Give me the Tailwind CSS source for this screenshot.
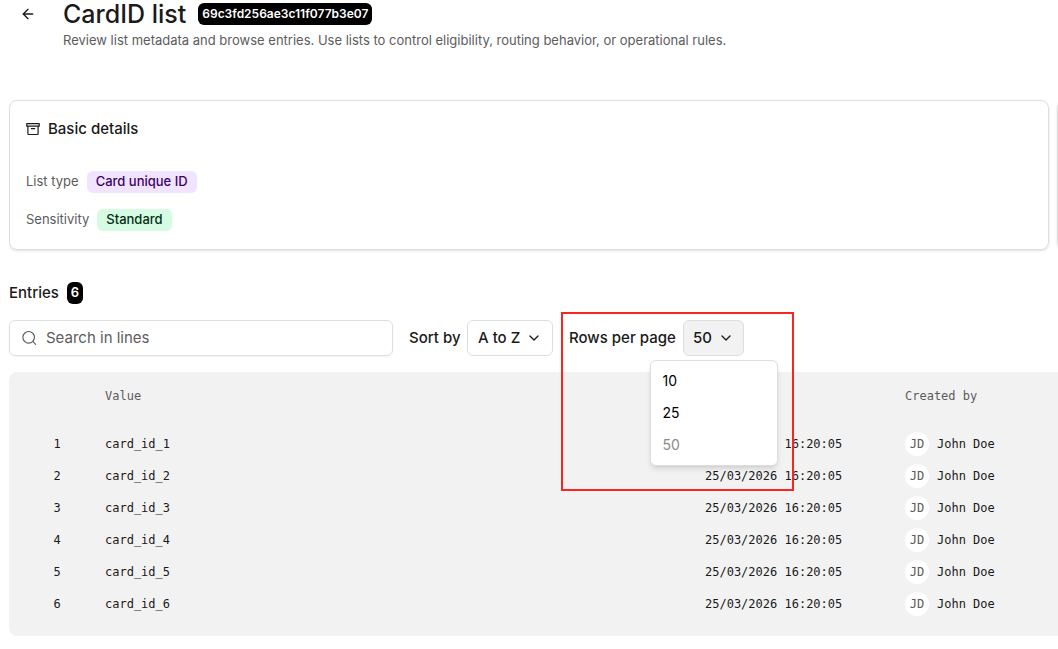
<!DOCTYPE html>
<html lang="en">
<head>
    <meta charset="UTF-8">
    <meta name="viewport" content="width=device-width, initial-scale=1.0">
    <title>CardID list</title>
    <script src="https://cdn.jsdelivr.net/npm/@tailwindcss/browser@4"></script>
</head>
<body class="bg-white font-[Inter,sans-serif] font-medium text-[#1a1a1a] overflow-x-hidden">
    <main class="pl-[9px]">
        <!-- Page header -->
        <header class="flex gap-[17px] pl-px">
            <a href="#" aria-label="Back" class="flex h-7 w-9 shrink-0 items-center justify-center">
                <svg class="size-4" viewBox="0 0 24 24" fill="none" stroke="currentColor" stroke-width="2" stroke-linecap="round" stroke-linejoin="round"><path d="m12 19-7-7 7-7"/><path d="M19 12H5"/></svg>
            </a>
            <div>
                <div class="flex h-7 items-center gap-3">
                    <h1 class="text-[25px] leading-7">CardID list</h1>
                    <span class="flex h-[22px] items-center rounded-md bg-black px-1 text-xs font-semibold text-white">69c3fd256ae3c11f077b3e07</span>
                </div>
                <p class="mt-0.5 text-[13px] leading-5 font-normal text-[#5c5c5c]">Review list metadata and browse entries. Use lists to control eligibility, routing behavior, or operational rules.</p>
            </div>
        </header>

        <!-- Detail cards -->
        <div class="mt-[50px] flex gap-2 overflow-x-clip">
            <section class="w-[calc(100%-9px)] shrink-0 rounded-lg border border-[#dedede] px-4 pt-4 pb-[18px] shadow-sm">
                <h2 class="flex h-6 items-center gap-2 text-[15px]">
                    <svg class="size-[14px]" viewBox="0 0 14 14" fill="none" stroke="currentColor" stroke-width="1.2" stroke-linejoin="round" stroke-linecap="round"><path d="M.8 1.6h12.4v2.6H.8zM1.9 4.4v7.2c0 .5.4.9.9.9h8.4c.5 0 .9-.4.9-.9V4.4M5.3 6.6h3.4"/></svg>
                    Basic details
                </h2>
                <dl class="mt-[30px] space-y-4 text-[13px]">
                    <div class="flex h-[22px] items-center gap-2">
                        <dt class="font-normal text-[#5c5c5c]">List type</dt>
                        <dd class="flex h-[22px] items-center rounded-md bg-[#f0e4ff] px-[9px] text-[#3c0366]">Card unique ID</dd>
                    </div>
                    <div class="flex h-[22px] items-center gap-2">
                        <dt class="font-normal text-[#5c5c5c]">Sensitivity</dt>
                        <dd class="flex h-[22px] items-center rounded-md bg-[#d5fbe2] px-[9px] text-[#032e15]">Standard</dd>
                    </div>
                </dl>
            </section>
            <section class="w-full shrink-0 rounded-lg border border-[#dedede] shadow-sm"></section>
        </div>

        <!-- Entries -->
        <h2 class="mt-8 flex h-[22px] items-center gap-2 text-[15px]">
            Entries
            <span class="flex h-[22px] items-center rounded-md bg-black px-1 text-[13px] font-semibold text-white">6</span>
        </h2>

        <div class="mt-4 flex gap-4 text-[15px]">
            <label class="flex h-9 w-96 items-center gap-2 rounded-md border border-[#dedede] px-3 shadow-xs">
                <svg class="size-4 shrink-0 text-[#5c5c5c]" viewBox="0 0 24 24" fill="none" stroke="currentColor" stroke-width="1.7" stroke-linecap="round" stroke-linejoin="round"><circle cx="10" cy="11" r="8.7"/><path d="m20.5 21.5-4-4"/></svg>
                <input type="search" aria-label="Search in lines" placeholder="Search in lines" class="min-w-0 flex-1 font-normal outline-none placeholder:text-[#5c5c5c]">
            </label>

            <div class="flex items-center gap-2">
                <label for="sortBy" class="w-[50px] whitespace-nowrap">Sort by</label>
                <div class="relative">
                    <select id="sortBy" class="h-9 w-[86px] appearance-none rounded-md border border-[#dedede] bg-white pl-[10px]">
                        <option>A to Z</option>
                        <option>Z to A</option>
                    </select>
                    <svg class="pointer-events-none absolute top-[10px] right-[11px] size-4" viewBox="0 0 24 24" fill="none" stroke="currentColor" stroke-width="2" stroke-linecap="round" stroke-linejoin="round"><path d="m6 9 6 6 6-6"/></svg>
                </div>
            </div>

            <div class="relative flex items-center gap-2">
                <label for="rowsPerPage" class="w-[106px] whitespace-nowrap">Rows per page</label>
                <div class="relative">
                    <button id="rowsPerPage" type="button" aria-haspopup="menu" aria-expanded="true" class="flex h-9 w-[61px] items-center justify-between rounded-md border border-[#dedede] bg-[#f2f2f2] px-[9px]">
                        50
                        <svg class="size-4" viewBox="0 0 24 24" fill="none" stroke="currentColor" stroke-width="2" stroke-linecap="round" stroke-linejoin="round"><path d="m6 9 6 6 6-6"/></svg>
                    </button>
                    <div role="menu" class="absolute top-full left-1/2 z-10 mt-1 flex w-32 -translate-x-1/2 flex-col rounded-md border border-[#dedede] bg-white p-1 text-sm font-normal text-black shadow-md">
                        <button type="button" role="menuitem" class="h-8 px-2 text-left">10</button>
                        <button type="button" role="menuitem" class="h-8 px-2 text-left">25</button>
                        <button type="button" role="menuitem" disabled class="h-8 px-2 text-left text-[#8c8c8c]">50</button>
                    </div>
                </div>
                <!-- Highlight frame -->
                <div class="pointer-events-none absolute -top-2 -left-2 z-20 h-[179px] w-[233px] border-2 border-[#fb2520]"></div>
            </div>
        </div>

        <div class="mt-4 rounded-l-lg bg-[#f2f2f2] pt-2 pb-4 pl-4 font-['DejaVu_Sans_Mono',monospace] text-xs font-normal">
            <table class="w-full table-fixed text-left">
                <thead class="text-[#5c5c5c]">
                    <tr class="h-12 align-top leading-8">
                        <th class="w-16"></th>
                        <th class="px-4 font-normal">Value</th>
                        <th class="w-[200px]"></th>
                        <th class="w-[169px] px-4 font-normal">Created by</th>
                    </tr>
                </thead>
                <tbody>
                    <tr class="h-8">
                        <td class="text-center">1</td>
                        <td class="px-4">card_id_1</td>
                        <td class="px-4">25/03/2026 16:20:05</td>
                        <td class="px-4"><div class="flex items-center gap-2"><span class="flex size-6 items-center justify-center rounded-full bg-white text-[#5c5c5c]">JD</span>John Doe</div></td>
                    </tr>
                    <tr class="h-8">
                        <td class="text-center">2</td>
                        <td class="px-4">card_id_2</td>
                        <td class="px-4">25/03/2026 16:20:05</td>
                        <td class="px-4"><div class="flex items-center gap-2"><span class="flex size-6 items-center justify-center rounded-full bg-white text-[#5c5c5c]">JD</span>John Doe</div></td>
                    </tr>
                    <tr class="h-8">
                        <td class="text-center">3</td>
                        <td class="px-4">card_id_3</td>
                        <td class="px-4">25/03/2026 16:20:05</td>
                        <td class="px-4"><div class="flex items-center gap-2"><span class="flex size-6 items-center justify-center rounded-full bg-white text-[#5c5c5c]">JD</span>John Doe</div></td>
                    </tr>
                    <tr class="h-8">
                        <td class="text-center">4</td>
                        <td class="px-4">card_id_4</td>
                        <td class="px-4">25/03/2026 16:20:05</td>
                        <td class="px-4"><div class="flex items-center gap-2"><span class="flex size-6 items-center justify-center rounded-full bg-white text-[#5c5c5c]">JD</span>John Doe</div></td>
                    </tr>
                    <tr class="h-8">
                        <td class="text-center">5</td>
                        <td class="px-4">card_id_5</td>
                        <td class="px-4">25/03/2026 16:20:05</td>
                        <td class="px-4"><div class="flex items-center gap-2"><span class="flex size-6 items-center justify-center rounded-full bg-white text-[#5c5c5c]">JD</span>John Doe</div></td>
                    </tr>
                    <tr class="h-8">
                        <td class="text-center">6</td>
                        <td class="px-4">card_id_6</td>
                        <td class="px-4">25/03/2026 16:20:05</td>
                        <td class="px-4"><div class="flex items-center gap-2"><span class="flex size-6 items-center justify-center rounded-full bg-white text-[#5c5c5c]">JD</span>John Doe</div></td>
                    </tr>
                </tbody>
            </table>
        </div>
    </main>
</body>
</html>
